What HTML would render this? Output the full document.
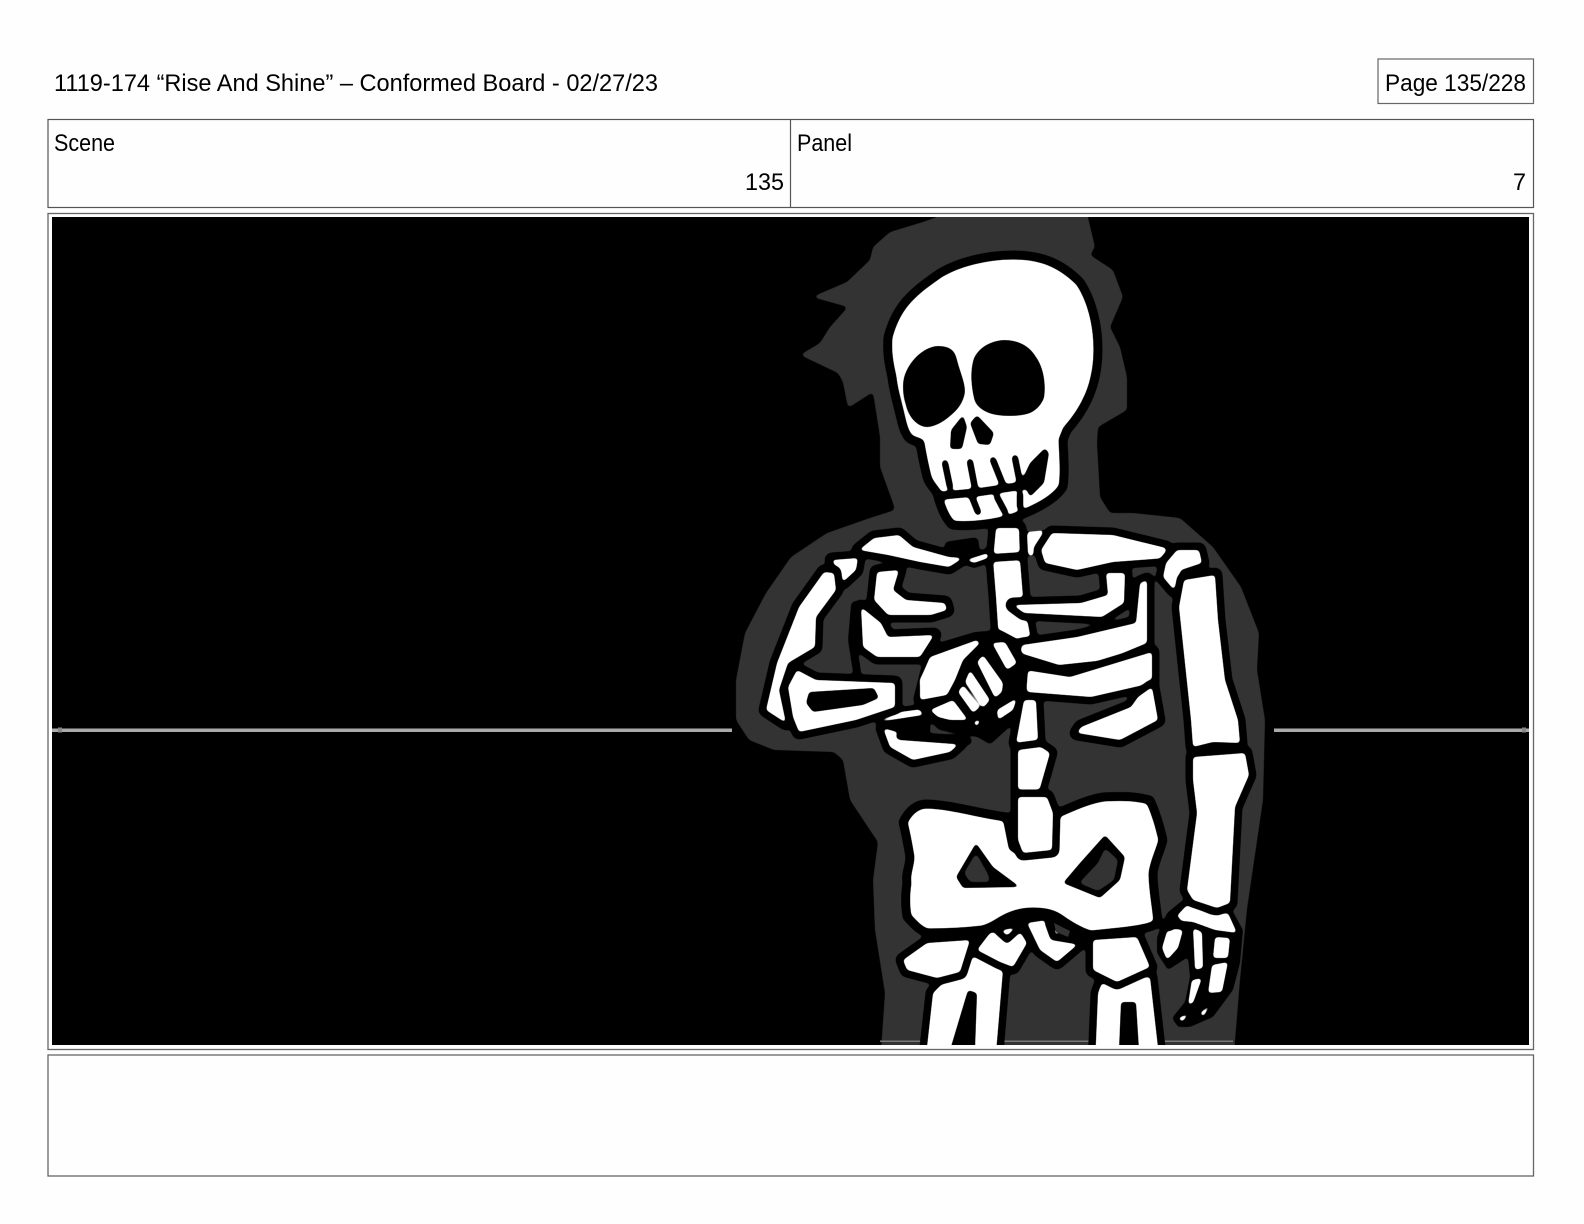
<!DOCTYPE html>
<html><head><meta charset="utf-8"><title>Board</title>
<style>
html,body{margin:0;padding:0;background:#fefefe}
svg{display:block}
text{font-family:"Liberation Sans",sans-serif;font-size:24px;fill:#000}
.o path{paint-order:stroke;stroke-width:15}
.o path.c{paint-order:normal;stroke-width:9}
</style></head>
<body>
<svg xmlns="http://www.w3.org/2000/svg" width="1584" height="1224" viewBox="0 0 1584 1224">
<defs>
<filter id="ink" filterUnits="userSpaceOnUse" x="700" y="190" width="620" height="900" color-interpolation-filters="sRGB">
<feGaussianBlur stdDeviation="1.9"/>
<feComponentTransfer>
<feFuncR type="linear" slope="6" intercept="-2.5"/>
<feFuncG type="linear" slope="6" intercept="-2.5"/>
<feFuncB type="linear" slope="6" intercept="-2.5"/>
<feFuncA type="linear" slope="6" intercept="-2.5"/>
</feComponentTransfer>
</filter>
<filter id="soft" filterUnits="userSpaceOnUse" x="700" y="190" width="620" height="900" color-interpolation-filters="sRGB">
<feGaussianBlur stdDeviation="2"/>
<feComponentTransfer><feFuncA type="linear" slope="6" intercept="-2.5"/></feComponentTransfer>
</filter>
</defs>
<rect width="1584" height="1224" fill="#fefefe"/>
<text x="54" y="91" textLength="604" lengthAdjust="spacingAndGlyphs">1119-174 “Rise And Shine” – Conformed Board - 02/27/23</text>
<rect x="1378" y="59" width="155.500" height="44.500" fill="none" stroke="#666" stroke-width="1.200"/>
<text x="1385" y="91" textLength="141" lengthAdjust="spacingAndGlyphs">Page 135/228</text>
<rect x="48" y="119.500" width="1485.500" height="88" fill="none" stroke="#555" stroke-width="1.200"/>
<line x1="790.500" y1="119.500" x2="790.500" y2="207.500" stroke="#555" stroke-width="1.200"/>
<text x="54" y="151" textLength="61" lengthAdjust="spacingAndGlyphs">Scene</text>
<text x="745" y="190" textLength="39" lengthAdjust="spacingAndGlyphs">135</text>
<text x="797" y="151" textLength="55" lengthAdjust="spacingAndGlyphs">Panel</text>
<text x="1513" y="190" textLength="13" lengthAdjust="spacingAndGlyphs">7</text>
<rect x="48" y="213.500" width="1485.500" height="836" fill="none" stroke="#666" stroke-width="1.300"/>
<rect x="48" y="1055" width="1485.500" height="121" fill="none" stroke="#666" stroke-width="1.300"/>

<svg x="52" y="217" width="1477" height="828" viewBox="52 217 1477 828">
<rect x="52" y="217" width="1477" height="828" fill="#000"/>
<rect x="52" y="728.500" width="680" height="3.500" fill="#aaa"/>
<rect x="1274" y="728.500" width="255" height="3.500" fill="#aaa"/>
<rect x="58" y="727.500" width="4" height="5" fill="#888"/>
<rect x="1522" y="727.500" width="4" height="5" fill="#888"/>

<g filter="url(#soft)">
<path fill="#333" d="M970 205L923 222 890 232 873 247 870 260 847 282 812 297 848 307 830 327 820 343 800 355 838 373 843 382 848 408 873 392 880 437 880 467 893 503 895 510 870 518 827 533 791 557 766 593 745 633 736 680 736 720 749 740 774 750 834 752 843 760 850 800 878 842 873 880 875 930 885 993 880 1065 1233 1065 1240 980 1247 909 1263 800 1265 720 1257 670 1259 633 1241 587 1213 547 1180 518 1133 513 1110 513 1100 497 1097 443 1098 427 1127 410 1127 377 1120 347 1110 327 1123 297 1113 270 1090 255 1095 247 1085 205Z"/>
</g>
<rect x="880" y="1040.500" width="353" height="1.500" fill="#777"/>

<g filter="url(#ink)">
<g class="o" fill="#fff" stroke="#000" stroke-linejoin="round" stroke-linecap="round">
<!-- spine upper -->
<path d="M996 528L1019 528 1020 560 1023 597 1031 640 999 642 996 597 993 560Z"/>
<path d="M1027 533L1047 531 1038 553 1028 555Z" style="stroke-width:2"/>
<!-- lower spine -->
<path d="M1024 700L1036 700 1038 740 1016 743Z"/>
<path d="M1018 750L1041 747 1050 753 1038 795 1018 797Z"/>
<!-- left shoulder and upper arm -->
<path d="M832 560L858 558 856 570 843 582Z"/>
<path d="M824 572L834 573 836 590 816 617 815 647 788 663 779 690 786 723 766 710 777 663 799 607Z"/>
<!-- clavicles -->
<path d="M859 550L874 538 899 535 913 547 949 557 963 558 949 567 920 562 888 555Z"/>
<path d="M966 560L988 553 988 558 974 563Z" style="stroke-width:10"/>
<path d="M1041 550L1052 533 1113 535 1166 548 1166 558 1113 562 1077 570 1045 563Z"/>
<!-- right shoulder -->
<path d="M1177 550L1199 550 1202 563 1181 570 1174 590 1163 577 1166 563Z"/>
<!-- left ribs -->
<path d="M861 607L881 623 888 637 934 635 920 657 877 657 863 647Z"/>
<path d="M877 572L899 570 893 590 906 600 945 603 947 610 931 615 888 615 874 600Z"/>
<!-- right ribs -->
<path d="M1140 583L1147 580 1147 643 1106 660 1059 665 1020 653 1022 645 1077 637 1136 623Z"/>
<path d="M1106 573L1125 573 1124 603 1102 617 1024 613 1013 605 1081 603 1108 595Z"/>
<path d="M1025 670L1070 677 1152 652 1152 683 1091 697 1027 692Z"/>
<path d="M1081 727L1131 707 1138 697 1152 687 1158 720 1120 740 1077 733Z"/>
<!-- lower left rib -->
<path d="M883 728L897 732 923 728 900 735 898 738 960 743 950 752 913 760 890 747Z"/>
<!-- left forearm -->
<path d="M880 720L900 712 930 708 933 718 890 723Z" style="stroke-width:10"/>
<path d="M797 670L816 680 895 683 895 707 856 720 799 732 793 717 788 687Z"/>
<path d="M809 692L874 688 879 698 863 705 813 712 806 703Z" fill="#000" stroke="none" style="stroke-width:0"/>
<!-- hand on chest: black mass -->
<path d="M915 700L925 660 938 645 975 634 1000 632 1015 640 1026 670 1024 695 1012 722 990 742 978 735 940 728 926 715Z" fill="#000" style="stroke-width:4"/>
</g>
<g fill="#fff">
<path d="M920 680L930 657 977 640 980 643 963 660 955 680 947 695 920 700Z"/>
<path d="M992 643L1005 642 1017 663 1007 670Z"/>
<path d="M977 662L983 655 1003 683 1002 692 995 698Z"/>
<path d="M965 682L970 670 990 700 983 708Z"/>
<path d="M958 692L963 685 980 707 973 713Z"/>
<path d="M930 710L953 700 968 720 950 720 938 717Z"/>
<path d="M997 710L1017 698 1013 710 998 720Z"/>
<path d="M973 722L981 719 977 727Z"/>
</g>
<g fill="none" stroke="#000" stroke-width="8" stroke-linecap="round" stroke-linejoin="round">
<path d="M992 558L1023 556"/>
<path d="M900 736L968 741"/>
<path d="M885 725L930 718"/>
<path d="M855 605L852 640 857 672"/>
<path d="M948 545L975 541 976 550 958 552" stroke-width="7"/>
</g>
<g class="o" fill="#fff" stroke="#000" stroke-linejoin="round" stroke-linecap="round">
<!-- right hand -->
<path d="M1157 937L1167 913 1183 900 1210 913 1232 910 1243 930 1240 963 1233 990 1213 1017 1190 1027 1178 1027 1172 1018 1185 1002 1190 977 1188 957 1168 970 1157 953Z" fill="#000" style="stroke-width:0"/>
</g>
<g fill="#fff">
<path d="M1168 928L1183 930 1178 948 1167 960 1162 948Z"/>
<path d="M1173 920L1187 905 1212 915 1228 913 1237 933 1215 930 1193 922Z"/>
<path d="M1193 928L1202 932 1203 968 1195 970Z"/>
<path d="M1215 937L1230 938 1228 958 1213 958Z"/>
<path d="M1212 965L1228 962 1222 992 1208 993Z"/>
<path d="M1192 980L1202 978 1193 1003 1188 1005Z"/>
<path d="M1178 1018L1190 1013 1182 1022Z"/>
<path d="M1200 1013L1212 1003 1203 1017Z"/>
</g>
<g class="o" fill="#fff" stroke="#000" stroke-linejoin="round" stroke-linecap="round">
<!-- right arm -->
<path d="M1184 580L1215 575 1218 620 1225 680 1238 720 1240 743 1213 742 1193 747 1191 720 1179 607Z"/>
<path d="M1193 757L1245 753 1249 775 1235 807 1230 903 1217 908 1193 900 1187 890 1197 813 1193 780Z"/>
<!-- femurs -->
<path d="M933 993L973 953 1003 970 995 1065 925 1065Z"/>
<path d="M1098 993L1103 980 1150 977 1160 1065 1095 1065Z"/>
<!-- hip pieces -->
<path d="M903 960L927 943 970 940 960 972 937 978 907 970Z"/>
<path d="M977 950L990 933 1017 927 1027 943 1013 967 1000 962Z"/>
<path d="M1027 923L1047 920 1063 937 1083 940 1057 962 1040 950Z"/>
<path d="M1093 940L1137 937 1150 967 1117 982 1093 970Z"/>
<!-- pelvis -->
<path class="c" d="M903 822C908 812 915 805 925 804C950 804 985 815 1007 817L1013 847Q1030 858 1053 848L1053 815C1070 808 1085 800 1103 797C1120 796 1135 796 1150 800C1157 815 1160 828 1163 840C1160 852 1155 860 1153 873C1153 890 1157 908 1158 923C1150 930 1120 932 1090 935C1075 930 1065 922 1057 917C1050 913 1040 912 1033 912C1020 912 1010 916 1003 920C995 925 990 928 983 930C965 932 945 933 927 933C918 930 912 922 907 917C905 905 905 895 907 883C905 875 910 865 910 857C908 845 905 830 903 822Z"/>
<!-- spine block -->
<path d="M1018 797L1047 797 1053 813 1052 850 1023 853 1018 840Z"/>
<!-- skull -->
<path class="c" d="M1013 255C1040 255 1060 262 1080 282C1092 300 1098 325 1098 350C1098 385 1085 410 1067 430L1063 440C1064 460 1065 475 1063 487C1055 500 1035 510 1013 518C995 524 970 527 952 525C945 518 940 505 937 493C933 487 928 482 927 477C924 465 922 455 920 443C915 441 910 440 908 437C903 430 903 425 902 423C898 405 893 390 892 377C888 360 887 350 888 337C892 322 898 310 907 300C918 288 930 280 940 273C952 266 965 262 973 260C985 257 1000 255 1013 255Z"/>
</g>
<g fill="#000">
<path d="M937 346C950 346 955 350 957 360C960 372 965 382 965 392C963 405 955 412 950 416C942 423 932 428 925 427C915 425 908 415 906 405C902 393 902 380 906 372C912 358 925 347 937 346Z"/>
<path d="M1003 340C1020 340 1030 347 1036 357C1044 368 1046 385 1044 398C1040 408 1032 413 1027 414C1015 417 1000 416 992 414C982 411 975 405 974 398C971 385 970 370 974 358C980 346 992 341 1003 340Z"/>
<path d="M963 415L967 427 962 449 950 449 951 430Z"/>
<path d="M977 415L994 433 990 445 978 444 970 423Z"/>
<path d="M1045 448L1030 463 1022 480 1030 497 1044 483 1049 453Z"/>
<path d="M968 990L977 993 975 1050 950 1050Z"/>
<path d="M1121 1002L1136 1002 1139 1050 1119 1050Z"/>
<path d="M976 843L956 877 963 888 1020 887 993 867Z"/>
<path d="M1105 835L1125 857 1120 880 1100 898 1063 883 1080 863Z"/>
</g>
<g fill="none" stroke="#000" stroke-linecap="round" stroke-linejoin="round" stroke-width="6.500">
<path d="M945 463L950 487"/><path d="M970 462L975 488"/><path d="M993 460L1003 485"/><path d="M1015 458L1020 483"/>
<path d="M938 496L980 492 1027 485" stroke-width="8"/>
<path d="M972 497L978 512"/><path d="M997 497L1005 512"/><path d="M1020 494L1020 507"/>
<path d="M998 932L1007 940 1018 930"/>
<path d="M1048 923L1053 937 1077 941"/>
<path d="M1177 920L1170 928"/>
</g>
</g>

<!-- gray holes over the ink -->
<g filter="url(#soft)" fill="#333">
<path d="M976 853L964 873 970 882 990 882 988 874Z"/>
<path d="M1105 848L1118 860 1114 880 1098 891 1079 883 1098 863Z"/>
</g>
<path d="M1054 923L1070 931 1068 937 1056 932Z" fill="#333"/>
<path d="M905 680L912 678 912 698 905 698Z" fill="#333"/>
</svg>
</svg>
</body></html>
